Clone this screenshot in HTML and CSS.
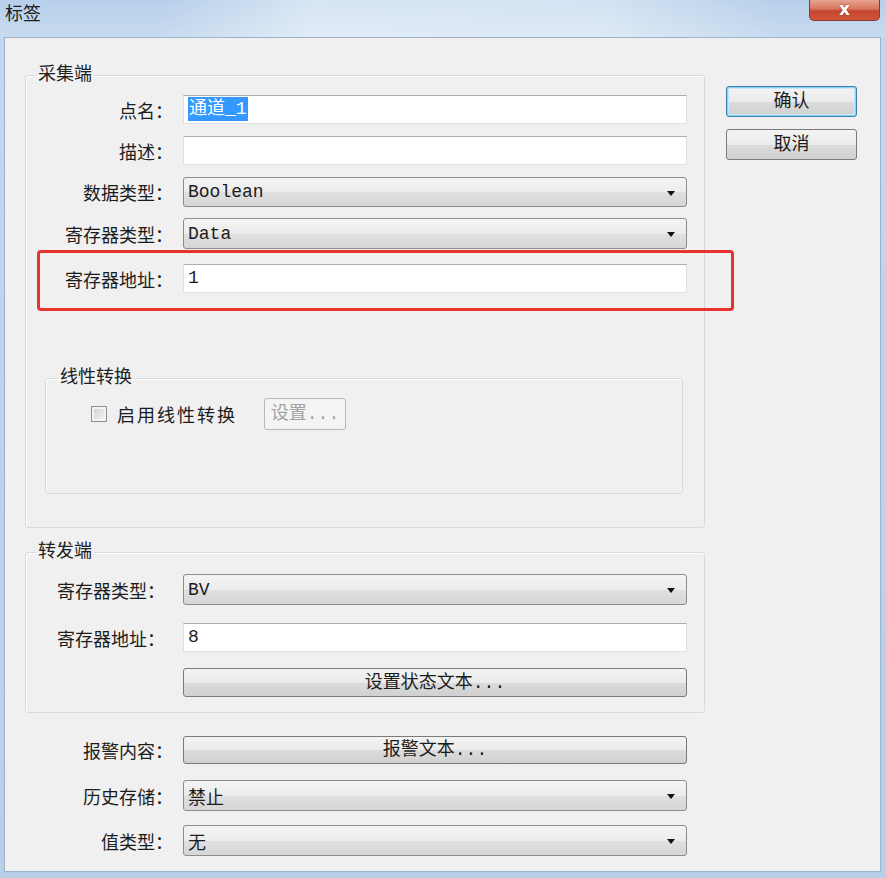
FILE: index.html
```html
<!DOCTYPE html>
<html lang="zh-CN">
<head>
    <meta charset="UTF-8">
    <meta name="viewport" content="width=device-width, initial-scale=1.0">
    <title>标签</title>
    <link rel="stylesheet" href="styles.css">
</head>
<body>
    <div id="window">
        <div id="titlebar">
            <span class="title">标签</span>
            <div class="close">x</div>
        </div>

        <div id="client">
            <div id="main">
                <fieldset class="group">
                    <legend>采集端</legend>
                    <div class="row r1">
                        <label>点名：</label>
                        <div class="edit"><span class="picked">通道_1</span></div>
                    </div>
                    <div class="row r2">
                        <label>描述：</label>
                        <div class="edit"></div>
                    </div>
                    <div class="row r3">
                        <label>数据类型：</label>
                        <div class="combo"><span>Boolean</span><i class="arrow"></i></div>
                    </div>
                    <div class="row r4">
                        <label>寄存器类型：</label>
                        <div class="combo"><span>Data</span><i class="arrow"></i></div>
                    </div>
                    <div class="row r5">
                        <label>寄存器地址：</label>
                        <div class="edit">1</div>
                    </div>

                    <fieldset class="group inner">
                        <legend>线性转换</legend>
                        <div class="check-row">
                            <span class="checkbox"></span>
                            <span class="check-text">启用线性转换</span>
                            <button class="btn small" disabled>设置...</button>
                        </div>
                    </fieldset>
                </fieldset>

                <fieldset class="group send">
                    <legend>转发端</legend>
                    <div class="row s1">
                        <label>寄存器类型：</label>
                        <div class="combo"><span>BV</span><i class="arrow"></i></div>
                    </div>
                    <div class="row s2">
                        <label>寄存器地址：</label>
                        <div class="edit">8</div>
                    </div>
                    <div class="row s3">
                        <label></label>
                        <button class="btn wide">设置状态文本...</button>
                    </div>
                </fieldset>

                <div class="bottom">
                    <div class="row b1">
                        <label>报警内容：</label>
                        <button class="btn wide">报警文本...</button>
                    </div>
                    <div class="row b2">
                        <label>历史存储：</label>
                        <div class="combo"><span>禁止</span><i class="arrow"></i></div>
                    </div>
                    <div class="row b3">
                        <label>值类型：</label>
                        <div class="combo"><span>无</span><i class="arrow"></i></div>
                    </div>
                </div>
            </div>

            <div id="side">
                <button class="btn side default">确认</button>
                <button class="btn side">取消</button>
            </div>
        </div>

        <!-- red annotation frame -->
        <div class="mark"></div>
    </div>
</body>
</html>
```

FILE: styles.css
```css
body {
    margin: 0;
    padding: 0;
    font-family: "Liberation Mono", "Noto Sans CJK SC", monospace;
    font-size: 18px;
    color: #1c1c1c;
}

#window {
    position: relative;
    width: 886px;
    height: 878px;
    box-sizing: border-box;
    background: linear-gradient(180deg, #c3d7ed, #b9cfe8);
    display: flex;
    flex-direction: column;
}

#titlebar {
    height: 37px;
    flex: none;
    display: flex;
    justify-content: space-between;
    align-items: flex-start;
    background:
        linear-gradient(90deg, rgba(255,255,255,0) 18%, rgba(255,255,255,0.45) 35%, rgba(255,255,255,0.4) 68%, rgba(255,255,255,0) 88%),
        linear-gradient(180deg, #b6cfea, #c8dbef);
}

#titlebar .title {
    padding: 5px 0 0 5px;
    line-height: 20px;
    color: #1e1e1e;
}

#titlebar .close {
    width: 71px;
    height: 21px;
    margin-right: 6px;
    box-sizing: border-box;
    border: 1px solid #8a3a2c;
    border-top: none;
    border-radius: 0 0 5px 5px;
    background: linear-gradient(180deg, #e8a392 0%, #d8745d 45%, #c54630 55%, #d0553b 100%);
    color: #ffffff;
    font-family: "DejaVu Sans", sans-serif;
    font-weight: bold;
    font-size: 17px;
    line-height: 18px;
    text-align: center;
    text-shadow: 0 0 2px #7a2a1c;
}

#client {
    flex: 1;
    margin: 0 5px 6px 4px;
    border: 1px solid #9db3cd;
    background-color: #f0f0f0;
    display: flex;
    align-items: flex-start;
}

#main {
    width: 680px;
    margin: 27px 0 0 20px;
}

#side {
    width: 131px;
    margin: 48px 0 0 21px;
    display: flex;
    flex-direction: column;
    gap: 12px;
}

.group {
    margin: 0;
    padding: 10px 17px 33px 0;
    border: 1px solid #d5dcdf;
    border-radius: 3px;
    box-shadow: inset 1px 1px 0 #ffffff;
}

.group legend {
    margin-left: 10px;
    padding: 0 2px;
    line-height: 20px;
    color: #222;
}

.group.inner {
    margin: 75px 4px 0 19px;
    padding: 10px 0 63px 0;
}

.group.inner legend {
    margin-left: 12px;
}

.group.send {
    margin-top: 14px;
    padding: 12px 17px 15px 0;
}

.bottom {
    padding-right: 18px;
}

.row {
    display: flex;
    align-items: center;
}

.row label {
    width: 147px;
    margin-right: 10px;
    text-align: right;
    flex: none;
}

.send .row label {
    width: 139px;
    margin-right: 18px;
}

.bottom .row label {
    width: 148px;
}

.r2, .r3 { margin-top: 12px; }
.r4 { margin-top: 11px; }
.r5 { margin-top: 15px; }
.s2 { margin-top: 18px; }
.s3 { margin-top: 16px; }
.b1 { margin-top: 23px; }
.b2 { margin-top: 16px; }
.b3 { margin-top: 14px; }

.edit {
    flex: 1;
    height: 29px;
    box-sizing: border-box;
    background: #ffffff;
    border: 1px solid #dde2e8;
    border-top-color: #abadb3;
    padding-left: 4px;
    line-height: 27px;
}

.picked {
    background-color: #3399ff;
    color: #ffffff;
    padding: 2px 1px;
}

.combo {
    flex: 1;
    height: 30px;
    box-sizing: border-box;
    border: 1px solid #8c8c8c;
    border-radius: 3px;
    background: linear-gradient(180deg, #f4f4f4 0%, #ececec 50%, #e0e0e0 51%, #d6d6d6 100%);
    display: flex;
    align-items: center;
    justify-content: space-between;
    padding: 0 11px 0 4px;
}

.r4 .combo, .s1 .combo, .b2 .combo, .b3 .combo {
    height: 31px;
}

.arrow {
    width: 0;
    height: 0;
    border-left: 4px solid transparent;
    border-right: 4px solid transparent;
    border-top: 5px solid #111;
    margin-top: 2px;
}

.btn {
    font-family: inherit;
    font-size: 18px;
    color: #1c1c1c;
    box-sizing: border-box;
    border: 1px solid #7a7a7a;
    border-radius: 3px;
    background: linear-gradient(180deg, #f3f3f3 0%, #ebebeb 50%, #dcdcdc 51%, #d0d0d0 100%);
    padding: 0;
    line-height: 20px;
}

.btn.wide {
    flex: 1;
    height: 29px;
}

.b1 .btn.wide {
    height: 28px;
}

.btn.side {
    width: 131px;
    height: 31px;
}

.btn.default {
    border-color: #3c7fb1;
    box-shadow: inset 0 0 0 1px #8fd0f2, inset 0 0 0 2px #c6e8f8;
}

.btn.small {
    width: 82px;
    height: 32px;
    margin-left: 27px;
    color: #a3a3a3;
    background: #f4f4f4;
    border-color: #b4b7ba;
}

.check-row {
    display: flex;
    align-items: center;
    padding-left: 45px;
}

.checkbox {
    width: 16px;
    height: 16px;
    box-sizing: border-box;
    border: 1px solid #8e8f8f;
    background: linear-gradient(135deg, #cfcfcf, #f4f4f4);
    box-shadow: inset 0 0 0 2px #f4f4f4;
}

.check-text {
    margin-left: 10px;
    letter-spacing: 2px;
}

.mark {
    position: absolute;
    left: 37px;
    top: 250px;
    width: 697px;
    height: 61px;
    box-sizing: border-box;
    border: 3px solid #e8322d;
    border-radius: 4px;
}
```
